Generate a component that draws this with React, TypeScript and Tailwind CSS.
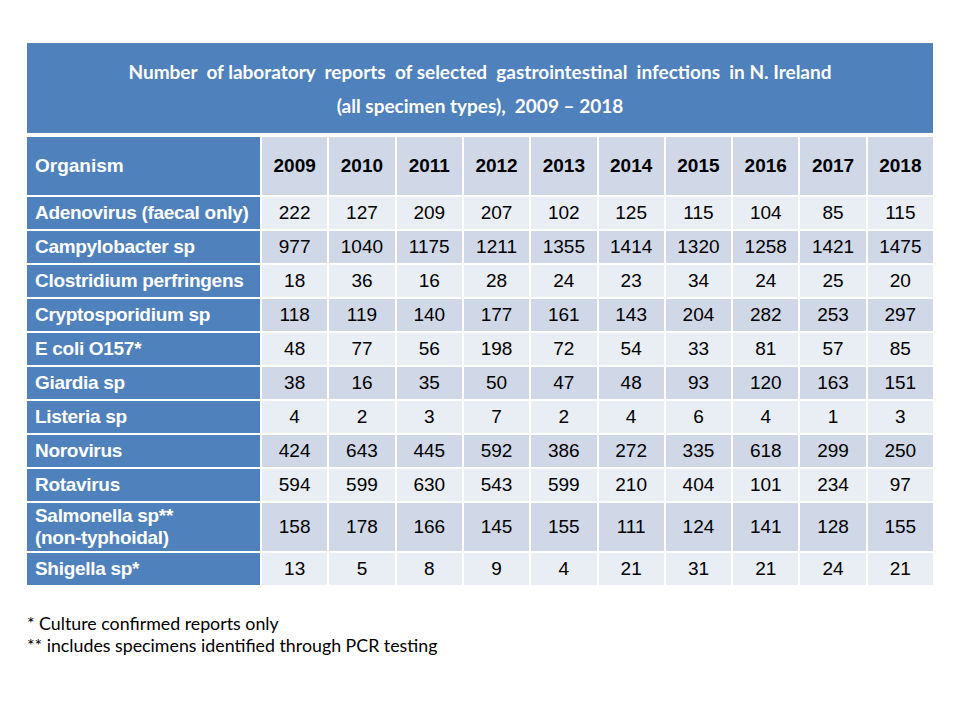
const years = ["2009", "2010", "2011", "2012", "2013", "2014", "2015", "2016", "2017", "2018"];

interface RowType {
  name: string[];
  values: number[];
  tall?: boolean;
}

const rows: RowType[] = [
  { name: ["Adenovirus (faecal only)"], values: [222, 127, 209, 207, 102, 125, 115, 104, 85, 115] },
  { name: ["Campylobacter sp"], values: [977, 1040, 1175, 1211, 1355, 1414, 1320, 1258, 1421, 1475] },
  { name: ["Clostridium perfringens"], values: [18, 36, 16, 28, 24, 23, 34, 24, 25, 20] },
  { name: ["Cryptosporidium sp"], values: [118, 119, 140, 177, 161, 143, 204, 282, 253, 297] },
  { name: ["E coli O157*"], values: [48, 77, 56, 198, 72, 54, 33, 81, 57, 85] },
  { name: ["Giardia sp"], values: [38, 16, 35, 50, 47, 48, 93, 120, 163, 151] },
  { name: ["Listeria sp"], values: [4, 2, 3, 7, 2, 4, 6, 4, 1, 3] },
  { name: ["Norovirus"], values: [424, 643, 445, 592, 386, 272, 335, 618, 299, 250] },
  { name: ["Rotavirus"], values: [594, 599, 630, 543, 599, 210, 404, 101, 234, 97] },
  { name: ["Salmonella sp**", "(non-typhoidal)"], values: [158, 178, 166, 145, 155, 111, 124, 141, 128, 155], tall: true },
  { name: ["Shigella sp*"], values: [13, 5, 8, 9, 4, 21, 31, 21, 24, 21] },
];

const App = () => {
  return (
    <div className="w-[960px] h-[720px] bg-white pt-[43px] px-[27px] font-['Liberation_Sans',Arial,sans-serif]">
      {/* title */}
      <div className="h-[90px] bg-[#4f81bd] flex flex-col items-center justify-center gap-[12px] pt-[1px] text-white font-bold text-[19px] leading-[22px] font-['Lato',sans-serif] whitespace-pre">
        <p>Number  of laboratory  reports  of selected  gastrointestinal  infections  in N. Ireland</p>
        <p>(all specimen types),  2009 – 2018</p>
      </div>

      {/* table */}
      <div className="mt-[4px] grid grid-cols-[233px_repeat(10,1fr)] gap-[2px] text-[19px] text-black">
        <div className="h-[58px] bg-[#4f81bd] text-white font-bold flex items-center pl-[8px]">Organism</div>
        {years.map((y) => (
          <div key={y} className="h-[58px] bg-[#d0d8e8] font-bold flex items-center justify-center">
            {y}
          </div>
        ))}

        {rows.map((row, i) => {
          const cellBg = i % 2 === 0 ? "bg-[#e9edf4]" : "bg-[#d0d8e8]";
          const h = row.tall ? "h-[48px]" : "h-[32px]";
          return (
            <div key={row.name[0]} className="contents">
              <div className={`${h} bg-[#4f81bd] text-white font-bold flex flex-col justify-center pl-[8px] leading-[22px] tracking-[-0.3px]`}>
                {row.name.map((n) => (
                  <span key={n}>{n}</span>
                ))}
              </div>
              {row.values.map((v, j) => (
                <div key={j} className={`${h} ${cellBg} flex items-center justify-center`}>
                  {v}
                </div>
              ))}
            </div>
          );
        })}
      </div>

      {/* notes */}
      <div className="mt-[27px] text-[17.8px] leading-[22px] font-['Lato',sans-serif] text-black">
        <p>* Culture confirmed reports only</p>
        <p>** includes specimens identified through PCR testing</p>
      </div>
    </div>
  );
};

export default App;
